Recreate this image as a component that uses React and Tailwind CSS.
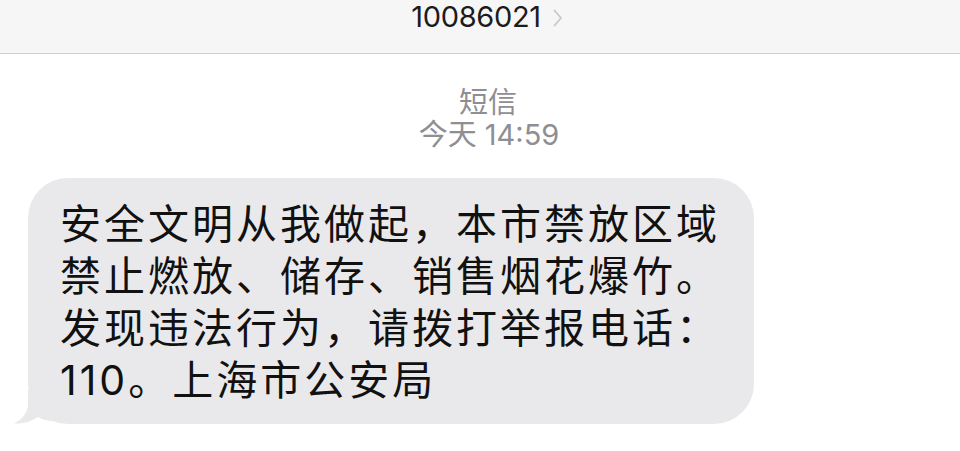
import React from "react";

const lines = [
  "安全文明从我做起，本市禁放区域",
  "禁止燃放、储存、销售烟花爆竹。",
  "发现违法行为，请拨打举报电话：",
  "110。上海市公安局",
];

function Chevron() {
  return (
    <svg width="10" height="18" viewBox="0 0 10 18" className="ml-[12px] mt-[2px]">
      <path d="M1.5 1.5 L8 9 L1.5 16.5" fill="none" stroke="#c7c7cc" strokeWidth="1.8" strokeLinecap="round" strokeLinejoin="round" />
    </svg>
  );
}

function Tail() {
  return (
    <svg
      width="40"
      height="34"
      viewBox="0 0 40 34"
      className="absolute bottom-0 left-[-14px]"
    >
      <path d="M14 0 L14 14 C14 22 9 29 0 33.5 C10 34 18 31 24 27 C28 29.5 33 31 40 31 L40 0 Z" fill="#e9e9eb" />
    </svg>
  );
}

export default function App() {
  return (
    <div
      className="h-[451px] w-[960px] overflow-hidden bg-white"
      style={{ fontFamily: 'Inter, "Noto Sans CJK SC", sans-serif' }}
    >
      {/* top bar */}
      <div className="flex h-[54px] items-start justify-center border-b border-[#d2d2d4] bg-[#f6f6f6] pl-[14px] pt-[1px]">
        <div className="flex items-center">
          <span className="text-[29px] leading-[31px] tracking-[-0.3px] text-[#1c1c1e]">10086021</span>
          <Chevron />
        </div>
      </div>

      {/* timestamp */}
      <div className="mt-[33px] flex flex-col items-center text-[#8e8e93]">
        <div className="pl-[16px] text-[29px] leading-[32px]">短信</div>
        <div className="pl-[18px] text-[29px] leading-[32px]">今天 14:59</div>
      </div>

      {/* bubble */}
      <div className="mt-[27px] pl-[28px]">
        <div className="relative w-[726px] rounded-[40px] bg-[#e9e9eb] pb-[18px] pl-[32px] pt-[20px] text-[41px] leading-[52px] tracking-[3px] text-[#111]">
          <Tail />
          {lines.map((l) => (
            <div key={l} className="relative whitespace-nowrap">
              {l}
            </div>
          ))}
        </div>
      </div>
    </div>
  );
}
